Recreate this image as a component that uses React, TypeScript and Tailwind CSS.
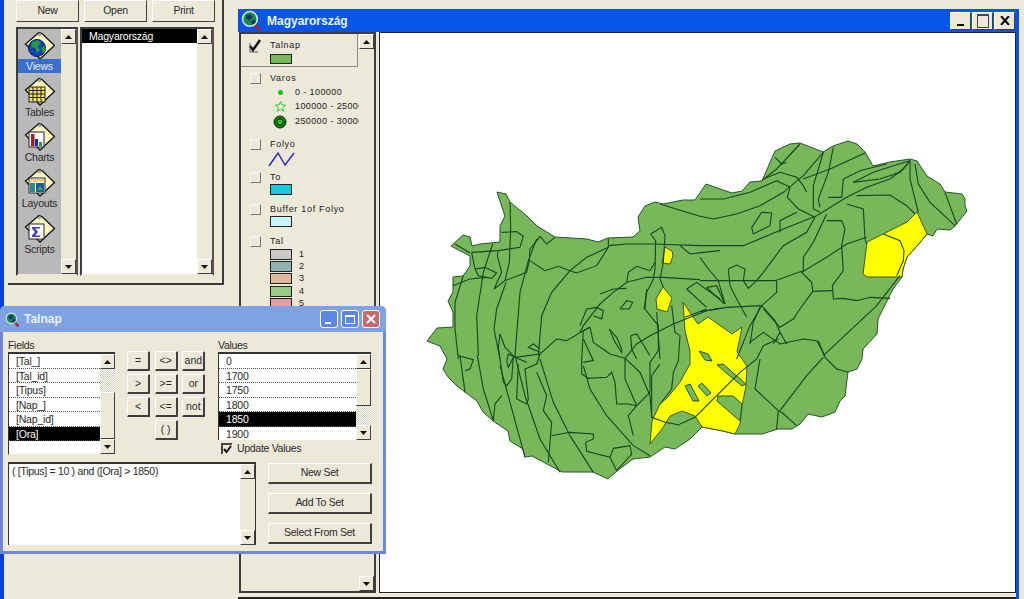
import type { ReactNode } from 'react';

const raised = 'border border-t-white border-l-white border-r-[#404040] border-b-[#404040] bg-[#ece9d8]';
const sunken = 'border-2 border-t-[#3c3c3c] border-l-[#3c3c3c] border-r-[#56564e] border-b-[#ece9d8]';
const dither = 'bg-[repeating-conic-gradient(#ffffff_0_25%,#d0cdbe_0_50%)] bg-[length:2px_2px]';
const uiText = 'text-[10.5px] tracking-[-0.3px] text-[#2a2a2a]';

function Arrow({ down }: { down?: boolean }) {
  return (
    <div className={`h-[15px] w-[15px] shrink-0 flex items-center justify-center ${raised}`}>
      <svg width="7" height="4" viewBox="0 0 7 4">
        <path d={down ? 'M0 0h7L3.5 4z' : 'M0 4h7L3.5 0z'} fill="#111" />
      </svg>
    </div>
  );
}

function Scrollbar({ parts }: { parts?: { dither: number; thumb: number; first: 'dither' | 'thumb' } }) {
  return (
    <div className="w-[15px] shrink-0 h-full flex flex-col bg-[#ece9d8]">
      <Arrow />
      {parts ? (
        parts.first === 'dither' ? (
          <div className="flex-1 flex flex-col">
            <div className={dither} style={{ height: parts.dither }} />
            <div className={`flex-1 ${raised}`} />
          </div>
        ) : (
          <div className="flex-1 flex flex-col">
            <div className={raised} style={{ height: parts.thumb }} />
            <div className={`flex-1 ${dither}`} />
          </div>
        )
      ) : (
        <div className="flex-1" />
      )}
      <Arrow down />
    </div>
  );
}

function TagIcon({ children }: { children: ReactNode }) {
  return (
    <svg width="32" height="30" viewBox="0 0 32 30" className="block">
      <path d="M15 1.5 L18 2.5 L30.5 14.5 L16 28 L1.500 13 Z" fill="#fbf6c0" stroke="#111" strokeWidth="1.3" />
      <circle cx="15.5" cy="3.5" r="1.3" fill="#b8b8b8" stroke="#555" strokeWidth=".5" />
      {children}
    </svg>
  );
}

const projectIcons: { label: string; icon: ReactNode }[] = [
  {
    label: 'Views',
    icon: (
      <>
        <circle cx="13" cy="17" r="8.5" fill="#1140b8" stroke="#0a1a50" />
        <path d="M8 11l6-2 3 3-3 3 2 4-3 3-2-5-4-1zM17 17l4-2 1 4-3 3z" fill="#1f9a3c" />
      </>
    ),
  },
  {
    label: 'Tables',
    icon: (
      <>
        <rect x="5" y="10" width="16" height="15" fill="#f4e84a" stroke="#222" />
        <path d="M5 13.500h16M5 17h16M5 20.500h16M9 10v15M13 10v15M17 10v15" stroke="#222" strokeWidth="1" />
      </>
    ),
  },
  {
    label: 'Charts',
    icon: (
      <>
        <rect x="5" y="10" width="15" height="15" fill="#fff" stroke="#222" />
        <rect x="7" y="12" width="3.5" height="12" fill="#a01c30" />
        <rect x="11" y="17" width="3" height="7" fill="#1a2a9c" />
        <rect x="15" y="20" width="3" height="4" fill="#1a9a3a" />
      </>
    ),
  },
  {
    label: 'Layouts',
    icon: (
      <>
        <rect x="5" y="10" width="16" height="15" fill="#fff" stroke="#222" />
        <rect x="6" y="11" width="14" height="3" fill="#e8d860" />
        <rect x="6" y="15" width="5" height="9" fill="#2a8a8a" />
        <rect x="12" y="15" width="8" height="9" fill="#1c58a0" />
        <path d="M13 22l3-4 3 4z" fill="#40b060" />
      </>
    ),
  },
  {
    label: 'Scripts',
    icon: (
      <>
        <rect x="5" y="10" width="15" height="15" fill="#fff" stroke="#222" />
        <path d="M8 13h8v1.500h-5l3 3.500-3 3.500h5V23H8v-1.500l3-3.500-3-3.500z" fill="#3a3ad8" />
      </>
    ),
  },
];

function ProjectWindow() {
  return (
    <div className="absolute left-[8px] top-0 w-[216px] h-[285px] border-r-2 border-b-2 border-[#3a3a3a] flex flex-col items-stretch pl-[8px] pr-[7px]">
      <div className="flex gap-[5px] h-[22px]">
        {['New', 'Open', 'Print'].map((b) => (
          <div key={b} className={`w-[63px] flex items-center justify-center ${uiText} ${raised}`}>
            {b}
          </div>
        ))}
      </div>
      <div className="flex gap-[2px] mt-[5px] h-[249px]">
        <div className={`w-[62px] flex ${sunken}`}>
          <div className="w-[45px] bg-[#b9b9b9] flex flex-col items-center pt-[2px]">
            {projectIcons.map((p) => (
              <div key={p.label} className="w-full h-[45.7px] flex flex-col items-center">
                <TagIcon>{p.icon}</TagIcon>
                <div className={`w-full h-[14px] -mt-[2px] text-center text-[10.5px] tracking-[-0.2px] leading-[14px] ${p.label === 'Views' ? 'bg-[#3a6fcf] text-[#e6ecff]' : 'text-[#2a2a2a]'}`}>
                  {p.label}
                </div>
              </div>
            ))}
          </div>
          <Scrollbar />
        </div>
        <div className={`w-[134px] flex bg-white ${sunken}`}>
          <div className="flex-1">
            <div className="h-[14px] bg-black text-white text-[10.5px] tracking-[-0.2px] leading-[14px] pl-[7px]">Magyarország</div>
          </div>
          <Scrollbar />
        </div>
      </div>
    </div>
  );
}

function GlobeLens({ size }: { size: number }) {
  return (
    <svg width={size} height={size} viewBox="0 0 20 20" className="shrink-0">
      <path d="M12 13l6 6" stroke="#9a2a30" strokeWidth="3" />
      <circle cx="8.500" cy="8.500" r="7" fill="#1c8a50" stroke="#d8e4e0" strokeWidth="1.5" />
      <path d="M5 5l4-1 2 3-3 3-3-2zM9 11l4-2 1 3-3 2z" fill="#12306a" />
    </svg>
  );
}

function Check({ on }: { on?: boolean }) {
  return (
    <div className={`w-[11px] h-[11px] shrink-0 relative ${on ? '' : 'border border-t-[#f8f6ee] border-l-[#f8f6ee] border-r-[#77776c] border-b-[#77776c]'}`}>
      {on && (
        <svg width="14" height="14" viewBox="0 0 14 14" className="absolute -left-[2px] -top-[1px]">
          <path d="M2 7l3 4 7-10" fill="none" stroke="#111" strokeWidth="2.4" />
          <path d="M2 4v9h8" fill="none" stroke="#555" strokeWidth="1" />
        </svg>
      )}
    </div>
  );
}

function Swatch({ color, small }: { color: string; small?: boolean }) {
  return <div className={`w-[22px] ${small ? 'h-[11px]' : 'h-[10px]'} border border-[#222] shrink-0`} style={{ backgroundColor: color }} />;
}

const legendText = 'text-[9px] leading-[11px] tracking-[0.7px] text-[#222] whitespace-nowrap';

function LegendHead({ label, on, className }: { label: string; on?: boolean; className?: string }) {
  return (
    <div className={`flex items-center gap-[9px] pl-[9px] ${className ?? ''}`}>
      <Check on={on} />
      <span className={legendText}>{label}</span>
    </div>
  );
}

function Legend() {
  const tal = [
    { n: '1', c: '#c9c9c7' },
    { n: '2', c: '#8fb3b5' },
    { n: '3', c: '#dcbb9c' },
    { n: '4', c: '#97c987' },
    { n: '5', c: '#e3a0a4' },
  ];
  return (
    <div className="w-[137px] shrink-0 h-full flex border-2 border-[#3c3c3c] border-r-[#3c3c3c] bg-[#ece9d8]">
      <div className="w-[118px] overflow-hidden">
        <div className="w-[117px] h-[33px] pt-[6px] border-r border-b border-[#8a8a80]">
          <LegendHead label="Talnap" on />
          <div className="pl-[29px] mt-[3px]"><Swatch color="#78b85a" /></div>
        </div>
        <LegendHead label="Varos" className="mt-[6px]" />
        <div className="text-[9px] leading-[11px] tracking-[0.4px] text-[#222] whitespace-nowrap">
          <div className="flex items-center h-[13px] mt-[2px]">
            <div className="w-[54px] shrink-0 pl-[32px]"><div className="w-[14px] flex justify-center"><span className="w-[5px] h-[5px] rounded-full bg-[#16c21a]" /></div></div>
            <span>0 - 100000</span>
          </div>
          <div className="flex items-center h-[14px]">
            <div className="w-[54px] shrink-0 pl-[32px]"><div className="w-[14px] flex justify-center">
              <svg width="11" height="11" viewBox="0 0 12 12"><path d="M6 .5l1.500 3.800 4 .2-3.100 2.600 1 4L6 8.900 2.600 11.100l1-4L.5 4.500l4-.2z" fill="#eafce0" stroke="#1ec21e" /></svg>
            </div></div>
            <span>100000 - 250000</span>
          </div>
          <div className="flex items-center h-[17px]">
            <div className="w-[54px] shrink-0 pl-[32px]"><div className="w-[14px] flex justify-center">
              <svg width="14" height="14" viewBox="0 0 14 14"><circle cx="7" cy="7" r="6" fill="#0a7a14" stroke="#0a2a0a" /><circle cx="7" cy="7" r="3" fill="#14d01c" stroke="#052005" /></svg>
            </div></div>
            <span>250000 - 300000</span>
          </div>
        </div>
        <LegendHead label="Folyo" className="mt-[9px]" />
        <div className="pl-[27px] mt-[1px]">
          <svg width="27" height="16" viewBox="0 0 27 16" className="block"><path d="M1 15L10 2l7 12L26 2" fill="none" stroke="#2222c8" strokeWidth="1.4" /></svg>
        </div>
        <LegendHead label="To" className="mt-[5px]" />
        <div className="pl-[29px] mt-[1px]"><Swatch color="#14c8d8" small /></div>
        <LegendHead label="Buffer 1of Folyo" className="mt-[9px]" />
        <div className="pl-[29px] mt-[1px]"><Swatch color="#c8f8fc" small /></div>
        <LegendHead label="Tal" className="mt-[9px]" />
        <div className="pl-[29px] mt-[1px] flex flex-col">
          {tal.map((t) => (
            <div key={t.n} className="flex items-center gap-[7px] h-[12.4px]">
              <div className="w-[22px] h-[11px] border border-[#222]" style={{ backgroundColor: t.c }} />
              <span className="text-[9px] leading-[11px] text-[#222]">{t.n}</span>
            </div>
          ))}
        </div>
      </div>
      <Scrollbar />
    </div>
  );
}

// page-space map: each group is drawn in the coordinates of one crop (3x, offset)
const outline =
  '427,342 437,329 453,328 453,313 448,302 453,293 453,278 463,277 470,267 470,257 451,247 463,236 470,238 472,247 480,245 500,243 500,227 505,217 497,193 506,195 510,203 527,217 537,227 555,238 587,240 598,243 608,239 633,238 640,232 638,218 645,207 655,203 663,205 683,201 695,201 706,185 720,190 732,194 742,192 750,183 762,182 775,152 790,145 800,144 823,153 833,147 848,142 857,145 865,153 873,167 890,163 910,160 917,162 927,177 940,185 945,193 962,195 965,200 965,207 967,212 955,227 950,231 937,230 933,237 927,235 917,247 907,258 903,270 902,278 893,290 888,300 878,320 877,335 863,350 862,360 857,370 848,373 845,397 840,402 835,413 822,418 808,415 800,425 792,430 778,430 762,435 735,435 723,432 702,428 690,440 675,450 665,448 650,458 633,460 617,472 608,480 593,473 562,473 547,465 532,457 525,458 523,450 510,442 508,432 493,422 483,413 477,402 457,387 448,378 443,370 447,360 440,347';

const yellowAreas = [
  '665,248 672,252 673,257 670,265 662,264',
  '663,288 672,299 667,313 657,310 656,300',
  '683,303 691,315 698,325 708,318 732,335 742,328 737,353 747,367 746,387 742,407 740,425 735,435 723,432 702,428 695,417 682,412 670,417 662,430 650,445 652,422 660,405 668,398 680,383 690,365 690,352 685,332',
  '917,213 927,235 917,247 907,258 903,270 902,278 867,278 863,275 867,243 883,235 907,223',
];

const greenHoles = [
  '699,352 708,355 712,362 705,361',
  '717,366 723,365 746,385 742,387 730,377',
  '685,387 690,385 699,402 693,402',
  '698,387 702,384 711,394 707,397',
  '717,402 718,397 733,397 742,405 740,422',
];

const z5 = [
  '270,220 272,300 268,400 255,455',
  '245,310 290,308 310,322 300,355 235,365 155,370',
  '405,325 380,345 360,322',
  '360,322 330,360 328,395 320,430 255,455 222,480 245,430 232,380 235,365',
  '350,330 325,395 300,490 285,680',
  '330,395 375,425 415,412 450,425 470,432 530,410 565,355 565,330',
  '565,355 500,385 450,425 395,490 365,560 355,680',
  '565,350 620,345 700,345 840,350',
  '155,370 165,420 195,415 230,432 215,448 175,440 165,420',
  '218,345 190,430 170,560 175,680',
  '130,440 105,520 105,600 115,690',
  '98,470 150,450 200,445',
  '258,460 230,540 222,600 240,690',
  '105,345 150,372',
  '692,315 725,295 735,320 730,400 720,450',
  '692,315 707,335 705,420 700,450 680,490 672,540',
  '720,450 730,475',
  '720,225 800,250 840,262',
  '780,350 810,375 850,370 900,365',
  '840,452 730,445 680,445 620,460 580,490 540,525 490,590 480,610',
  '620,460 625,430 650,412 690,425 705,400',
  '540,495 580,480 620,478',
  '600,540 620,515 638,520 628,540 600,540',
  '480,590 500,540 530,535 550,545 545,570 520,560',
  '568,600 590,625 605,660 605,670 585,640 568,600',
  '632,620 650,615 690,680',
  '632,620 635,660 650,690',
  '710,550 715,620 720,690',
  '800,480 830,460 900,510',
  '800,480 860,535',
];

const z6 = [
  '0,210 70,210 150,190 230,155 270,175',
  '225,85 245,105 260,100',
  '185,155 230,120 300,45',
  '190,150 240,130 290,145 310,170 320,190',
  '0,262 40,270 110,255 180,230 250,190 310,140 370,70',
  '370,70 340,170 340,240 360,250',
  '400,55 385,130 355,210 360,235',
  '495,72 390,120 310,150',
  '270,175 262,205 295,240 345,265',
  '385,205 425,205 430,150 480,125 560,105',
  '460,160 520,130 580,110 630,95',
  '460,160 540,150 600,130 630,95',
  '630,95 610,120 570,150 500,175 440,205 350,260 250,300 130,350 0,350',
  '630,95 630,150 655,250',
  '645,105 655,165 690,220 765,290',
  '735,190 770,285',
  '440,225 490,240 495,330 500,345',
  '470,200 570,198 620,230 645,255',
  '345,265 320,310 250,350 190,430 170,455',
  '380,255 340,340 310,385 310,425 225,455 0,455',
  '380,275 425,275 435,300 425,350 430,425 397,470 400,510 430,508 470,515 510,505 570,508',
  '500,325 440,345 380,385 305,430 335,460 338,487 397,485',
  '338,487 300,540 280,570 240,595 190,540',
  '185,250 215,252 210,290 160,315 155,295 185,250',
  '240,310 240,275 290,250',
  '0,385 25,420 55,455 75,525',
  '85,420 110,408 135,420 130,455 145,478 170,455',
  '85,420 90,470 110,510 135,555 140,565',
  '20,475 50,470 75,525 40,495 20,475',
  '0,548 80,535 185,530 225,575 240,610 220,645',
  '185,530 150,590 110,690',
  '230,455 230,490 185,530',
  '150,640 190,610 240,645 310,630 350,635 375,680',
  '600,440 530,530 370,680',
  '550,315 600,335 612,365 610,395 590,440',
];

const z7 = [
  '240,135 235,175 250,280 260,290 275,270 280,205 265,235 260,215',
  '240,135 255,175 285,205 320,220',
  '260,215 265,195 285,205 360,195 410,150 440,155 490,125 510,115',
  '360,190 325,175 340,165 360,180',
  '120,200 135,310',
  '172,200 190,300 220,395',
  '240,230 270,340 315,505',
  '285,200 315,320 360,450 420,550',
  '360,210 400,340 450,440 520,550',
  '115,200 160,212 150,240 135,245',
  '245,320 225,345 220,395',
  '295,225 290,330 320,345 325,330 315,240 350,225 360,195',
  '350,250 380,320 370,365 395,400 385,520',
  '395,440 450,430 520,435 520,450 497,460 500,487 570,505 590,545',
  '570,505 580,478 630,470 635,495 590,545',
  '640,440 625,380 650,350 615,270 615,210',
  '510,115 490,125 485,215 485,255 505,268 560,265 575,250 585,280 590,345 625,345 650,350',
  '490,150 520,215 490,220',
  '490,230 510,300 560,380 640,470 690,500',
  '510,115 520,160 570,195 615,208 660,250 690,320 695,385 735,400 780,408',
  '615,208 650,165 690,140 760,105 860,65 900,58',
  '650,350 690,310 690,220 715,185 715,110 675,60 680,0',
  '695,385 695,260 720,225',
  '755,50 765,130 780,140 775,215 760,250 755,300 720,345',
];

const z8 = [
  '120,405 165,385 200,350 300,250 350,210 370,170 415,150',
  '135,85 200,60',
  '360,210 345,300 415,365 425,370 470,410',
  '415,365 410,420',
  '420,365 500,260 550,205',
  '535,155 555,205 590,240 625,250',
  '420,130 440,165',
  '360,55 340,100 330,165',
];

const lineGroups: { x: number; y: number; lines: string[] }[] = [
  { x: 420, y: 130, lines: z5 },
  { x: 700, y: 130, lines: z6 },
  { x: 420, y: 290, lines: z7 },
  { x: 640, y: 290, lines: z8 },
];

function HungaryMap() {
  return (
    <svg viewBox="380 34 635 559" className="w-full h-full block">
      <polygon points={outline} fill="#78b85a" stroke="#24552a" strokeWidth="1" />
      {yellowAreas.map((p) => (
        <polygon key={p} points={p} fill="#ffff00" stroke="#3c5a14" strokeWidth="1" />
      ))}
      {greenHoles.map((p) => (
        <polygon key={p} points={p} fill="#78b85a" stroke="#24552a" strokeWidth="1" />
      ))}
      {lineGroups.map((g) => (
        <g key={`${g.x}-${g.y}`} transform={`translate(${g.x} ${g.y}) scale(${1 / 3})`}>
          {g.lines.map((l) => (
            <polyline key={l} points={l} fill="none" stroke="#17451f" strokeWidth="1.1" vectorEffect="non-scaling-stroke" />
          ))}
        </g>
      ))}
    </svg>
  );
}

function ViewWindow() {
  return (
    <div className="absolute left-[238px] top-[9px] right-[5px] bottom-0 flex flex-col bg-[#ece9d8] border-r-[3px] border-[#0a4fe0]">
      <div className="h-[23px] shrink-0 bg-[#0556e8] flex items-center pl-[3px] pr-[1px]">
        <GlobeLens size={21} />
        <span className="ml-[5px] font-bold text-[12px] text-[#eef4ff]">Magyarország</span>
        <div className="ml-auto flex gap-[1px]">
          <div className={`w-[21px] h-[18px] flex items-end justify-center pb-[3px] ${raised}`}>
            <span className="block w-[7px] h-[2px] bg-black" />
          </div>
          <div className={`w-[21px] h-[18px] flex items-center justify-center ${raised}`}>
            <span className="block w-[12px] h-[14px] border border-[#444] border-t-2" />
          </div>
          <div className={`w-[21px] h-[18px] flex items-center justify-center ${raised}`}>
            <svg width="10" height="9" viewBox="0 0 10 9"><path d="M1 0l8 9M9 0L1 9" stroke="#000" strokeWidth="2" /></svg>
          </div>
        </div>
      </div>
      <div className="flex-1 flex gap-[3px] pl-[1px] pb-[4px] min-h-0 h-[555px] border-b-2 border-[#222]">
        <Legend />
        <div className="flex-1 bg-white border border-[#222] min-w-0">
          <HungaryMap />
        </div>
      </div>
    </div>
  );
}

const listRow = 'h-[14.5px] shrink-0 pl-[7px] leading-[14px] border-b border-dotted border-[#555] text-[10.5px] tracking-[-0.2px]';

function OpButton({ label }: { label: string }) {
  return (
    <div className={`w-[23px] h-[20px] flex items-center justify-center text-[10.5px] text-[#2a2a2a] ${raised} border-r-2 border-b-2 rounded-[1px]`}>
      {label}
    </div>
  );
}

function WideButton({ label }: { label: string }) {
  return (
    <div className={`w-[104px] h-[21px] flex items-center justify-center ${uiText} ${raised} border-b-2 border-r-2`}>
      {label}
    </div>
  );
}

function TitleButton({ children, red }: { children: ReactNode; red?: boolean }) {
  return (
    <div className={`w-[18px] h-[18px] rounded-[3px] border border-white flex items-center justify-center ${red ? 'bg-[#c66a6e]' : 'bg-[#5c88e4]'}`}>
      {children}
    </div>
  );
}

function TalnapDialog() {
  const fields = ['[Tal_]', '[Tal_id]', '[Tipus]', '[Nap_]', '[Nap_id]', '[Ora]'];
  const values = ['0', '1700', '1750', '1800', '1850', '1900'];
  const ops = ['=', '<>', 'and', '>', '>=', 'or', '<', '<=', 'not'];
  return (
    <div className="absolute left-0 top-[306px] w-[386px] h-[248px] bg-[#ece9d8] border-x-[3px] border-b-[3px] border-[#6f86d6] rounded-t-[5px] flex flex-col">
      <div className="h-[26px] -mx-[3px] shrink-0 rounded-t-[5px] bg-[#7ea2e2] flex items-center pl-[5px] pr-[6px]">
        <GlobeLens size={15} />
        <span className="ml-[4px] font-bold text-[12px] text-[#e8f0ff]">Talnap</span>
        <div className="ml-auto flex gap-[3px]">
          <TitleButton><span className="block w-[6px] h-[2px] bg-white mt-[7px] -ml-[3px]" /></TitleButton>
          <TitleButton><span className="block w-[10px] h-[9px] border border-white border-t-2" /></TitleButton>
          <TitleButton red>
            <svg width="10" height="10" viewBox="0 0 10 10"><path d="M1 1l8 8M9 1L1 9" stroke="#fff" strokeWidth="2" /></svg>
          </TitleButton>
        </div>
      </div>
      <div className="flex pl-[5px] h-[134px] pt-[7px]">
        <div className="w-[107px]">
          <div className={`${uiText} leading-[13px]`}>Fields</div>
          <div className="h-[103px] flex border-l border-t-2 border-[#333] border-b border-b-[#ece9d8] bg-white">
            <div className="flex-1 flex flex-col text-[#2a2a2a]">
              {fields.map((f) => (
                <div key={f} className={`${listRow} ${f === '[Ora]' ? 'bg-black text-white' : ''}`}>{f}</div>
              ))}
            </div>
            <div className="h-[100px]">
              <Scrollbar parts={{ first: 'dither', dither: 23, thumb: 0 }} />
            </div>
          </div>
        </div>
        <div className="ml-[12px] mt-[12px] w-[80px]">
          <div className="grid grid-cols-3 gap-x-[3px] gap-y-[3px]">
            {ops.map((o) => <OpButton key={o} label={o} />)}
            <div />
            <OpButton label="( )" />
          </div>
        </div>
        <div className="ml-[11px] w-[153px]">
          <div className={`${uiText} leading-[13px]`}>Values</div>
          <div className="h-[88px] flex border-l border-t-2 border-[#333] bg-white">
            <div className="flex-1 flex flex-col overflow-hidden text-[#2a2a2a]">
              {values.map((v) => (
                <div key={v} className={`${listRow} ${v === '1850' ? 'bg-black text-white' : ''}`}>{v}</div>
              ))}
            </div>
            <Scrollbar parts={{ first: 'thumb', dither: 16, thumb: 37 }} />
          </div>
          <div className="flex items-center mt-[2px] pl-[3px] gap-[5px]">
            <div className="w-[11px] h-[11px] border-t-2 border-l-2 border-[#444] bg-[#ece9d8] flex items-center justify-center">
              <svg width="9" height="9" viewBox="0 0 9 9"><path d="M1 4l2.500 3L8 1" fill="none" stroke="#111" strokeWidth="2" /></svg>
            </div>
            <span className={`${uiText} leading-[13px]`}>Update Values</span>
          </div>
        </div>
      </div>
      <div className="flex pl-[5px] mt-[-4px]">
        <div className="w-[248px] h-[83px] flex bg-white border-l border-t-2 border-r border-[#333]">
          <div className={`flex-1 pl-[3px] leading-[15px] ${uiText}`}>( [Tipus] = 10 ) and ([Ora] &gt; 1850)</div>
          <Scrollbar />
        </div>
        <div className="ml-[12px] mt-[1px] flex flex-col gap-[9px]">
          {['New Set', 'Add To Set', 'Select From Set'].map((b) => <WideButton key={b} label={b} />)}
        </div>
      </div>
    </div>
  );
}

export default function App() {
  return (
    <div className="relative w-[1024px] h-[599px] overflow-hidden bg-[#ece9d8] font-['Liberation_Sans',Arial,sans-serif]">
      <div className="absolute left-0 top-0 bottom-0 w-[4px] bg-[#0a3ee0]" />
      <ProjectWindow />
      <ViewWindow />
      <TalnapDialog />
    </div>
  );
}
